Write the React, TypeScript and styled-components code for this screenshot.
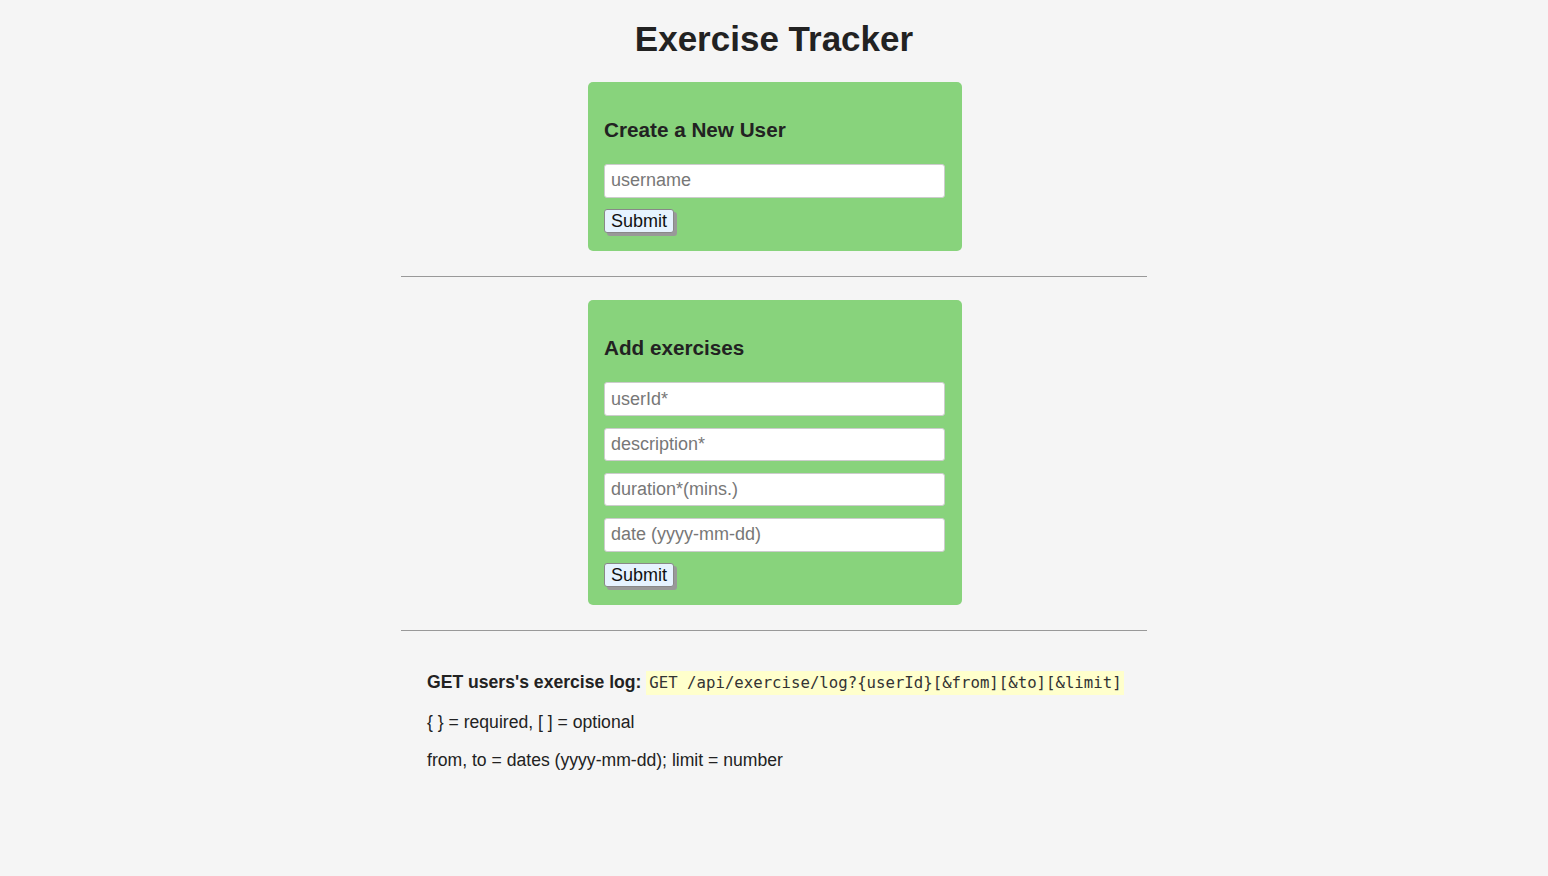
import React from 'react';
import styled, { createGlobalStyle } from 'styled-components';

const GlobalStyle = createGlobalStyle`
  body {
    margin: 0;
    background: #f5f5f5;
    color: #222;
    font-family: "Liberation Sans", Arial, sans-serif;
  }
`;

const Title = styled.h1`
  margin: 19px 0 0;
  text-align: center;
  font-size: 35px;
  line-height: 40px;
  font-weight: bold;
  color: #222;
`;

const Container = styled.div`
  width: 746px;
  margin: 23px auto 0;
`;

const FormBox = styled.form`
  width: 374px;
  box-sizing: border-box;
  margin: 0 0 0 187px;
  padding: 16px 16px 18px;
  background: #88d37c;
  border-radius: 5px;
`;

const FormTitle = styled.h3`
  margin: 20px 0 23px;
  font-size: 20.7px;
  line-height: 23px;
  font-weight: bold;
`;

const Field = styled.input`
  display: block;
  width: 341px;
  height: 33.6px;
  box-sizing: border-box;
  margin: 0 0 11.7px;
  padding: 0 6px;
  border: 1px solid #ccc;
  border-radius: 3px;
  background: #fff;
  font-family: "Liberation Sans", Arial, sans-serif;
  font-size: 18px;
  color: #222;
  &::placeholder {
    color: #777;
  }
`;

const SubmitButton = styled.button`
  display: block;
  height: 24px;
  padding: 0 6px;
  border: 1px solid #888;
  border-radius: 3px;
  background: #e6f3ff;
  box-shadow: 3px 3px 0 #999;
  font-family: "Liberation Sans", Arial, sans-serif;
  font-size: 18px;
  line-height: 20px;
  color: #111;
`;

const Rule = styled.hr`
  margin: 25px 0 23px;
  border: 0;
  border-top: 1px solid #999;
`;

const Notes = styled.div`
  padding: 17px 0 0 26px;
`;

const Note = styled.p`
  margin: 0 0 15.5px;
  font-size: 17.6px;
  line-height: 23px;
  white-space: nowrap;
  color: #222;
`;

const Code = styled.code`
  display: inline-block;
  padding: 0 2px 0 3px;
  background: #ffffcc;
  font-family: "DejaVu Sans Mono", monospace;
  font-size: 15.7px;
  line-height: 24px;
  color: #333;
`;

export default function App() {
  return (
    <>
      <GlobalStyle />
      <Title>Exercise Tracker</Title>
      <Container>
        <FormBox onSubmit={(e) => e.preventDefault()}>
          <FormTitle>Create a New User</FormTitle>
          <Field placeholder="username" />
          <SubmitButton type="submit">Submit</SubmitButton>
        </FormBox>
        <Rule />
        <FormBox onSubmit={(e) => e.preventDefault()}>
          <FormTitle>Add exercises</FormTitle>
          <Field placeholder="userId*" />
          <Field placeholder="description*" />
          <Field placeholder="duration*(mins.)" />
          <Field placeholder="date (yyyy-mm-dd)" />
          <SubmitButton type="submit">Submit</SubmitButton>
        </FormBox>
        <Rule />
        <Notes>
          <Note>
            <strong>GET users's exercise log:</strong> <Code>GET /api/exercise/log?{'{userId}'}[&amp;from][&amp;to][&amp;limit]</Code>
          </Note>
          <Note>{'{ } = required, [ ] = optional'}</Note>
          <Note>from, to = dates (yyyy-mm-dd); limit = number</Note>
        </Notes>
      </Container>
    </>
  );
}
